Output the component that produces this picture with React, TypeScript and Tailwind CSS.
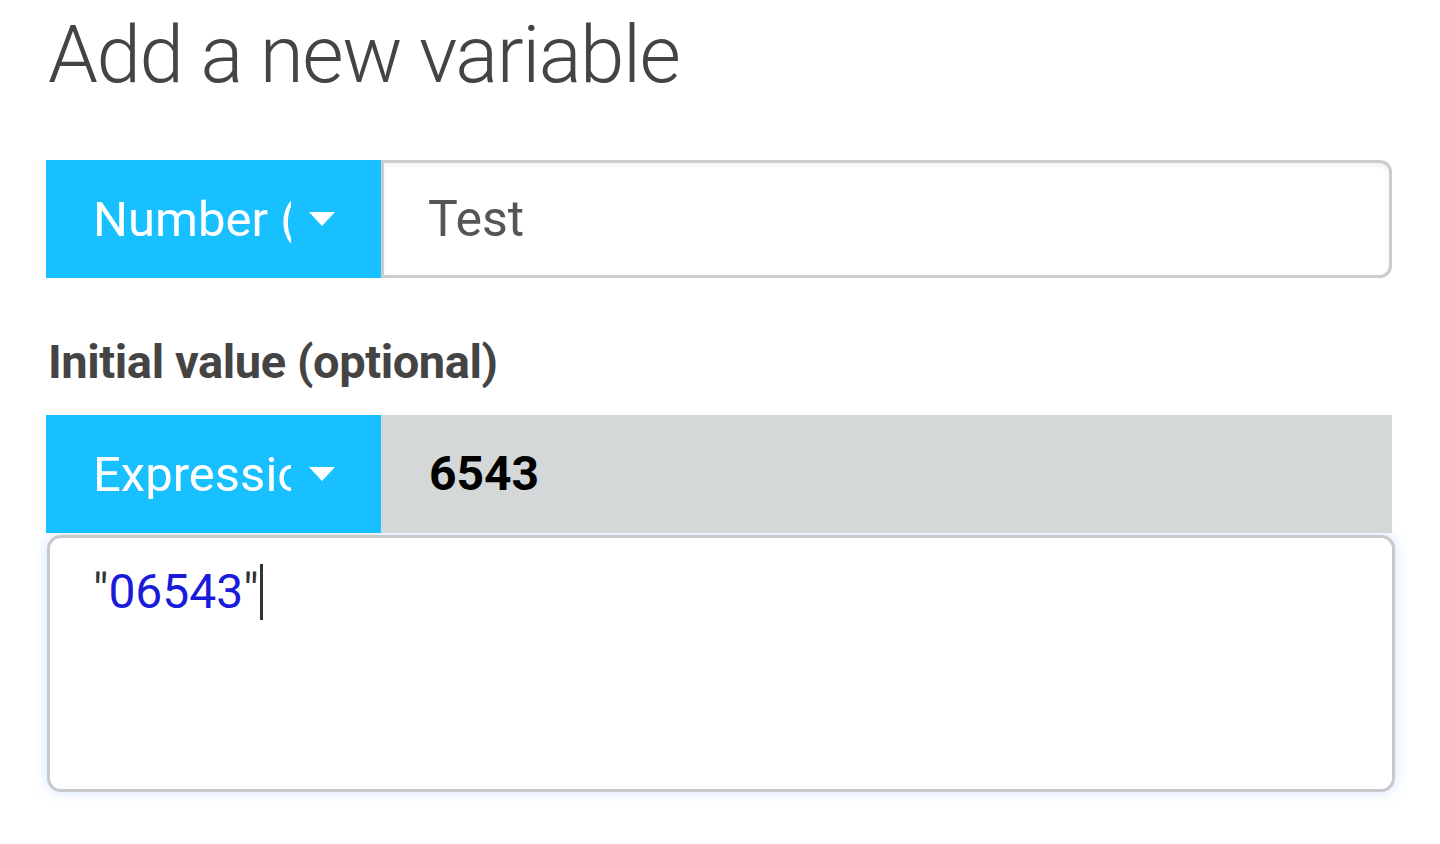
import React from "react";

function Caret() {
  return (
    <svg width="26" height="14" viewBox="0 0 26 14" className="shrink-0">
      <path d="M0 0 L26 0 L13 14 Z" fill="white" />
    </svg>
  );
}

export default function App() {
  return (
    <div
      className="w-[1440px] h-[844px] bg-white overflow-hidden pl-[46px] pr-[48px] pt-[8px]"
      style={{ fontFamily: "Roboto, 'Liberation Sans', sans-serif" }}
    >
      <h1 className="text-[80px] font-light leading-[94px] tracking-[-1.5px] text-[#444444] pl-[2px]">
        Add a new variable
      </h1>

      {/* variable type + name */}
      <div className="flex h-[118px] mt-[58px]">
        <button className="w-[335px] shrink-0 bg-[#19c0ff] flex items-center pl-[47px] pr-[46px] gap-[18px] overflow-hidden">
          <span className="text-white text-[49px] leading-none whitespace-nowrap overflow-hidden flex-1 text-left">
            Number (Integer)
          </span>
          <Caret />
        </button>
        <div className="flex-1 flex items-center border-[3px] border-[#cccccc] rounded-r-[12px] pl-[44px] shadow-[inset_0_3px_4px_rgba(0,0,0,0.05)]">
          <span className="text-[50px] text-[#555555] leading-none">Test</span>
        </div>
      </div>

      <div className="mt-[54px] pl-[2px] text-[47px] font-bold tracking-[-0.4px] text-[#444444] leading-[60px]">
        Initial value (optional)
      </div>

      {/* initial value */}
      <div className="flex h-[118px] mt-[23px]">
        <button className="w-[335px] shrink-0 bg-[#19c0ff] flex items-center pl-[47px] pr-[46px] gap-[18px] overflow-hidden">
          <span className="text-white text-[49px] leading-none whitespace-nowrap overflow-hidden flex-1 text-left">
            Expression
          </span>
          <Caret />
        </button>
        <div className="flex-1 flex items-center bg-[#d4d8d9] pl-[48px]">
          <span className="text-[48px] font-bold text-black leading-none">6543</span>
        </div>
      </div>

      <div className="ml-[1px] -mr-[3px] mt-[2px] h-[257px] border-[3px] border-[#c8c9cc] rounded-[14px] bg-white shadow-[0_0_14px_rgba(120,180,255,0.35)] pl-[43px] pt-[22px]">
        <div className="text-[48px] leading-[64px] flex items-center">
          <span className="text-[#333333]">"</span>
          <span className="text-[#1a1adb]">06543</span>
          <span className="text-[#333333]">"</span>
          <span className="inline-block w-[3px] h-[56px] bg-[#333333] ml-[1px]" />
        </div>
      </div>
    </div>
  );
}
